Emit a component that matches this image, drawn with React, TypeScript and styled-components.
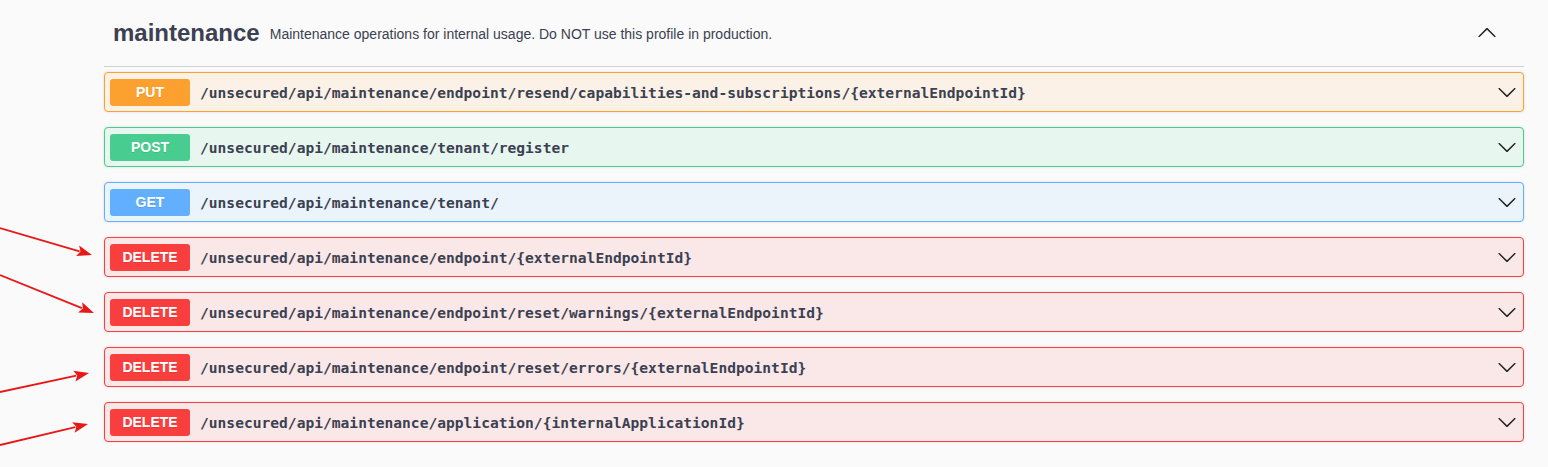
import React from "react";
import styled, { createGlobalStyle } from "styled-components";

const Global = createGlobalStyle`
  html, body { margin: 0; padding: 0; background: #fafafa; }
  body { font-family: "Liberation Sans", Arial, sans-serif; color: #3b4151; }
`;

type Method = "PUT" | "POST" | "GET" | "DELETE";

const colors: Record<Method, { main: string; bg: string }> = {
  PUT: { main: "#fca130", bg: "#fbf1e6" },
  POST: { main: "#49cc90", bg: "#e8f6f0" },
  GET: { main: "#61affe", bg: "#ebf3fb" },
  DELETE: { main: "#f93e3e", bg: "#fae7e7" },
};

const Page = styled.div`
  position: relative;
  width: 1548px;
  height: 467px;
  overflow: hidden;
  background: #fafafa;
`;

const Section = styled.section`
  width: 1420px;
  margin-left: 104px;
`;

const TagHeader = styled.div`
  display: flex;
  align-items: center;
  height: 67px;
  box-sizing: border-box;
  padding: 0 27px 0 9px;
  border-bottom: 1px solid #cfd0d3;
  margin-bottom: 5px;
`;

const TagTitle = styled.span`
  font-size: 24px;
  line-height: 28px;
  font-weight: 700;
  color: #3b4151;
`;

const TagDesc = styled.small`
  flex: 1;
  font-size: 14px;
  line-height: 16px;
  padding: 0 10px;
  color: #3b4151;
  margin-top: 1px;
`;

const Toggle = styled.span`
  display: flex;
  width: 20px;
  height: 20px;
`;

const Op = styled.div<{ $m: Method }>`
  display: flex;
  align-items: center;
  height: 40px;
  box-sizing: border-box;
  padding: 0 5px;
  margin-bottom: 15px;
  border: 1px solid ${(p) => colors[p.$m].main};
  background: ${(p) => colors[p.$m].bg};
  border-radius: 4px;
  box-shadow: 0 0 3px rgba(0, 0, 0, 0.12);
`;

const Badge = styled.span<{ $m: Method }>`
  width: 80px;
  height: 27px;
  display: flex;
  align-items: center;
  justify-content: center;
  border-radius: 3px;
  background: ${(p) => colors[p.$m].main};
  color: #fff;
  font-weight: 700;
  font-size: 14px;
  text-shadow: 0 1px 0 rgba(0, 0, 0, 0.1);
`;

const Path = styled.span`
  flex: 1;
  padding: 0 10px;
  font-family: "DejaVu Sans Mono", monospace;
  font-weight: 700;
  font-size: 14.6px;
  color: #3b4151;
`;

const Chevron = styled.svg`
  width: 20px;
  height: 20px;
  margin-right: 1px;
  flex: none;
`;

const Arrows = styled.svg`
  position: absolute;
  left: 0;
  top: 0;
  pointer-events: none;
`;

const arrowPath =
  "M17.418 6.109c.272-.268.709-.268.979 0s.271.701 0 .969l-7.908 7.83c-.27.268-.707.268-.979 0l-7.908-7.83c-.27-.268-.27-.701 0-.969.271-.268.709-.268.979 0L10 13.25l7.418-7.141z";

const ops: { m: Method; path: string }[] = [
  { m: "PUT", path: "/unsecured/api/maintenance/endpoint/resend/capabilities-and-subscriptions/{externalEndpointId}" },
  { m: "POST", path: "/unsecured/api/maintenance/tenant/register" },
  { m: "GET", path: "/unsecured/api/maintenance/tenant/" },
  { m: "DELETE", path: "/unsecured/api/maintenance/endpoint/{externalEndpointId}" },
  { m: "DELETE", path: "/unsecured/api/maintenance/endpoint/reset/warnings/{externalEndpointId}" },
  { m: "DELETE", path: "/unsecured/api/maintenance/endpoint/reset/errors/{externalEndpointId}" },
  { m: "DELETE", path: "/unsecured/api/maintenance/application/{internalApplicationId}" },
];

const arrows = [
  { x1: 0, y1: 228, x2: 92, y2: 255 },
  { x1: 0, y1: 275, x2: 94, y2: 313 },
  { x1: 0, y1: 392, x2: 89, y2: 373 },
  { x1: 0, y1: 445, x2: 88, y2: 424 },
];

function Arrow({ x1, y1, x2, y2 }: { x1: number; y1: number; x2: number; y2: number }) {
  const dx = x2 - x1;
  const dy = y2 - y1;
  const len = Math.hypot(dx, dy);
  const ux = dx / len;
  const uy = dy / len;
  const hl = 15;
  const hw = 5.5;
  const bx = x2 - ux * hl;
  const by = y2 - uy * hl;
  const px = -uy * hw;
  const py = ux * hw;
  return (
    <g>
      <line x1={x1} y1={y1} x2={bx + ux * 2} y2={by + uy * 2} stroke="#e81818" strokeWidth={1.8} />
      <polygon
        points={`${x2},${y2} ${bx + px},${by + py} ${bx + ux * 3},${by + uy * 3} ${bx - px},${by - py}`}
        fill="#e81818"
      />
    </g>
  );
}

export default function App() {
  return (
    <Page>
      <Global />
      <Section>
        <TagHeader>
          <TagTitle>maintenance</TagTitle>
          <TagDesc>Maintenance operations for internal usage. Do NOT use this profile in production.</TagDesc>
          <Toggle>
            <svg width="20" height="20" viewBox="0 0 20 20">
              <path d={arrowPath} fill="#222" transform="rotate(180 10 10)" />
            </svg>
          </Toggle>
        </TagHeader>
        {ops.map((o, i) => (
          <Op key={i} $m={o.m}>
            <Badge $m={o.m}>{o.m}</Badge>
            <Path>{o.path}</Path>
            <Chevron viewBox="0 0 20 20">
              <path d={arrowPath} fill="#222" />
            </Chevron>
          </Op>
        ))}
      </Section>
      <Arrows width="120" height="467">
        {arrows.map((a, i) => (
          <Arrow key={i} {...a} />
        ))}
      </Arrows>
    </Page>
  );
}
